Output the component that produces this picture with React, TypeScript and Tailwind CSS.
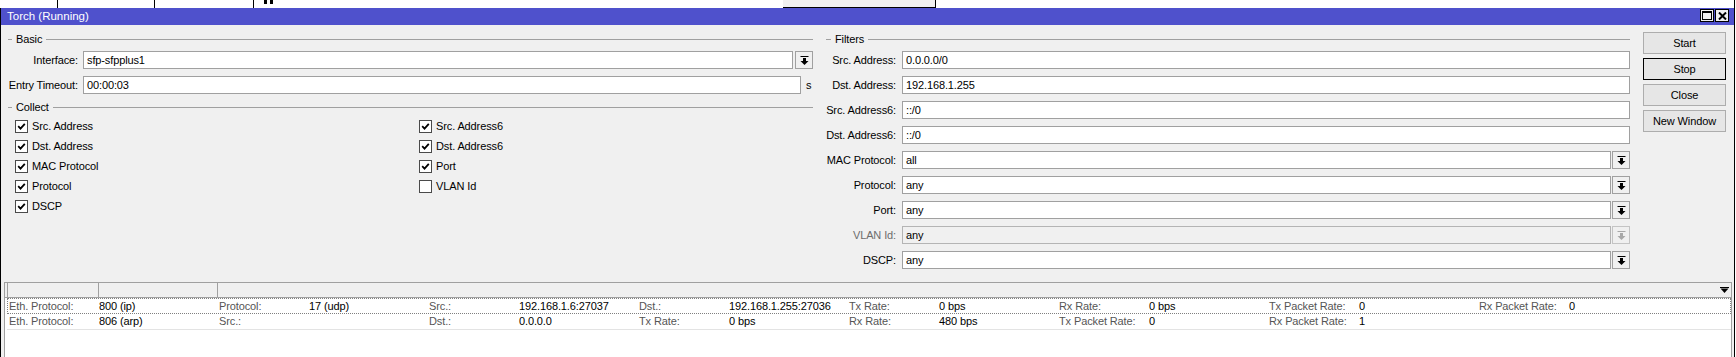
import React from "react";

function DropIcon({ disabled }: { disabled?: boolean }) {
  const c = disabled ? "#a8a8a8" : "#000";
  return (
    <svg width="9" height="9" viewBox="0 0 9 9">
      <rect x="0.5" y="0" width="8" height="1" fill={c} />
      <rect x="3" y="2" width="3" height="3" fill={c} />
      <polygon points="0.5,5 8.5,5 4.5,9" fill={c} />
    </svg>
  );
}

function DropBtn({ disabled }: { disabled?: boolean }) {
  return (
    <div
      className={
        "w-[18px] h-[18px] border flex items-center justify-center " +
        (disabled ? "border-[#c4c4c4] bg-[#f0f0f0]" : "border-[#a0a0a0] bg-[#f0f0f0]")
      }
    >
      <DropIcon disabled={disabled} />
    </div>
  );
}

function Legend({ title, dash }: { title: string; dash: string }) {
  return (
    <div className="h-[14px] flex items-center">
      <div className={dash + " h-px bg-[#a0a0a0]"} />
      <span className="px-[4px]">{title}</span>
      <div className="flex-1 h-px bg-[#a0a0a0]" />
    </div>
  );
}

function Check({ checked, label }: { checked: boolean; label: string }) {
  return (
    <div className="h-[20px] flex items-center">
      <div className="w-[13px] h-[13px] border border-[#4a4a4a] bg-white flex items-center justify-center">
        {checked && (
          <svg width="9" height="9" viewBox="0 0 9 9">
            <path d="M1.2 4.2 L3.5 6.6 L7.8 1.8" stroke="#000" strokeWidth="1.8" fill="none" />
          </svg>
        )}
      </div>
      <span className="ml-[4px]">{label}</span>
    </div>
  );
}

function FilterRow({
  label,
  value,
  drop,
  disabled,
  first,
}: {
  label: string;
  value: string;
  drop?: boolean;
  disabled?: boolean;
  first?: boolean;
}) {
  return (
    <div className={(first ? "mt-[5px]" : "mt-[7px]") + " h-[18px] flex items-center"}>
      <div className={"w-[70px] flex justify-end whitespace-nowrap " + (disabled ? "text-[#6d6d6d]" : "")}>
        {label}
      </div>
      <div
        className={
          "ml-[6px] flex-1 h-[18px] border flex items-center pl-[3px] " +
          (disabled ? "bg-[#f0f0f0] border-[#b4b4b4]" : "bg-white border-[#a0a0a0]")
        }
      >
        {value}
      </div>
      {drop && (
        <div className="ml-[1px]">
          <DropBtn disabled={disabled} />
        </div>
      )}
    </div>
  );
}

function Cell({ label, value }: { label: string; value: string }) {
  return (
    <div className="w-[210px] flex shrink-0 whitespace-nowrap">
      <span className="w-[90px] text-[#555]">{label}</span>
      <span className="w-[120px]">{value}</span>
    </div>
  );
}

function WinBtn({ kind }: { kind: "max" | "close" }) {
  return (
    <div className="w-[14px] h-[13px] border border-black bg-[#f0f0f0] flex items-center justify-center">
      {kind === "max" ? (
        <svg width="10" height="9" viewBox="0 0 10 9">
          <rect x="0.5" y="0.5" width="9" height="8" stroke="#000" fill="none" />
          <rect x="0" y="0" width="10" height="2" fill="#000" />
        </svg>
      ) : (
        <svg width="9" height="8" viewBox="0 0 9 8">
          <path d="M1 0.5 L8 7.5 M8 0.5 L1 7.5" stroke="#000" strokeWidth="2" />
        </svg>
      )}
    </div>
  );
}

export default function App() {
  const row1: [string, string][] = [
    ["Eth. Protocol:", "800 (ip)"],
    ["Protocol:", "17 (udp)"],
    ["Src.:", "192.168.1.6:27037"],
    ["Dst.:", "192.168.1.255:27036"],
    ["Tx Rate:", "0 bps"],
    ["Rx Rate:", "0 bps"],
    ["Tx Packet Rate:", "0"],
    ["Rx Packet Rate:", "0"],
  ];
  const row2: [string, string][] = [
    ["Eth. Protocol:", "806 (arp)"],
    ["Src.:", ""],
    ["Dst.:", "0.0.0.0"],
    ["Tx Rate:", "0 bps"],
    ["Rx Rate:", "480 bps"],
    ["Tx Packet Rate:", "0"],
    ["Rx Packet Rate:", "1"],
  ];

  return (
    <div className="w-[1736px] h-[357px] bg-white overflow-hidden font-['Liberation_Sans',Arial,sans-serif] text-[11px] tracking-[-0.12px] text-black leading-none">
      {/* strip of window behind */}
      <div className="h-[8px] flex">
        <div className="w-[57px] bg-white" />
        <div className="w-px bg-black" />
        <div className="w-[96px] bg-white" />
        <div className="w-px bg-black" />
        <div className="w-[98px] bg-white" />
        <div className="w-px bg-black" />
        <div className="w-[10px] bg-white" />
        <div className="w-[3px] h-[4px] bg-black" />
        <div className="w-[3px] bg-white" />
        <div className="w-[3px] h-[4px] bg-black" />
        <div className="w-[510px] bg-white" />
        <div className="w-[152px] bg-[#f0f0f0] border-b border-black" />
        <div className="w-px bg-black" />
        <div className="flex-1 bg-white" />
        <div className="w-px bg-black" />
        <div className="w-px bg-white" />
      </div>

      <div className="h-[349px] w-[1735px] border-x border-black bg-[#f0f0f0] flex flex-col">
        {/* title bar */}
        <div className="h-[17px] bg-[#4f51cc] flex items-center pl-[6px] pr-[5px] text-white">
          <span className="text-[11.5px] tracking-normal">Torch (Running)</span>
          <div className="flex-1" />
          <div className="flex gap-[1px] self-start mt-[1px]">
            <WinBtn kind="max" />
            <WinBtn kind="close" />
          </div>
        </div>

        {/* form */}
        <div className="h-[257px] flex pl-[7px] pt-[7px]">
          {/* Basic / Collect */}
          <div className="w-[805px] flex flex-col">
            <Legend title="Basic" dash="w-[4px]" />
            <div className="mt-[5px] h-[18px] flex items-center">
              <div className="w-[70px] flex justify-end whitespace-nowrap">Interface:</div>
              <div className="ml-[5px] flex-1 h-[18px] bg-white border border-[#a0a0a0] flex items-center pl-[3px]">
                sfp-sfpplus1
              </div>
              <div className="ml-[2px]">
                <DropBtn />
              </div>
            </div>
            <div className="mt-[7px] h-[18px] flex items-center">
              <div className="w-[70px] flex justify-end whitespace-nowrap">Entry Timeout:</div>
              <div className="ml-[5px] flex-1 h-[18px] bg-white border border-[#a0a0a0] flex items-center pl-[3px]">
                00:00:03
              </div>
              <span className="w-[12px] pl-[5px]">s</span>
            </div>
            <div className="mt-[6px]">
              <Legend title="Collect" dash="w-[4px]" />
            </div>
            <div className="mt-[2px] pl-[7px] grid grid-cols-[404px_1fr]">
              <Check checked label="Src. Address" />
              <Check checked label="Src. Address6" />
              <Check checked label="Dst. Address" />
              <Check checked label="Dst. Address6" />
              <Check checked label="MAC Protocol" />
              <Check checked label="Port" />
              <Check checked label="Protocol" />
              <Check checked={false} label="VLAN Id" />
              <Check checked label="DSCP" />
            </div>
          </div>

          {/* Filters */}
          <div className="ml-[13px] w-[804px] flex flex-col">
            <Legend title="Filters" dash="w-[5px]" />
            <FilterRow first label="Src. Address:" value="0.0.0.0/0" />
            <FilterRow label="Dst. Address:" value="192.168.1.255" />
            <FilterRow label="Src. Address6:" value="::/0" />
            <FilterRow label="Dst. Address6:" value="::/0" />
            <FilterRow label="MAC Protocol:" value="all" drop />
            <FilterRow label="Protocol:" value="any" drop />
            <FilterRow label="Port:" value="any" drop />
            <FilterRow label="VLAN Id:" value="any" drop disabled />
            <FilterRow label="DSCP:" value="any" drop />
          </div>

          {/* buttons */}
          <div className="ml-[13px] w-[83px] flex flex-col gap-[4px]">
            <div className="h-[22px] border border-[#adadad] bg-[#e6e6e6] flex items-center justify-center">Start</div>
            <div className="h-[22px] border border-black bg-[#e6e6e6] flex items-center justify-center">Stop</div>
            <div className="h-[22px] border border-[#adadad] bg-[#e6e6e6] flex items-center justify-center">Close</div>
            <div className="h-[22px] border border-[#adadad] bg-[#e6e6e6] flex items-center justify-center">New Window</div>
          </div>
        </div>

        {/* table */}
        <div className="flex-1 ml-[3px] mr-[2px] border-t border-l border-r border-[#a0a0a0] bg-white flex flex-col">
          <div className="h-[15px] bg-[#f0f0f0] border-b border-[#a0a0a0] flex">
            <div className="w-[3px] border-r border-[#a0a0a0]" />
            <div className="w-[91px] border-r border-[#a0a0a0]" />
            <div className="w-[119px] border-r border-[#a0a0a0]" />
            <div className="flex-1" />
            <div className="w-[14px] flex items-center justify-center">
              <svg width="9" height="6" viewBox="0 0 9 6">
                <rect x="0" y="0" width="9" height="1" fill="#000" />
                <polygon points="0.5,1.5 8.5,1.5 4.5,6" fill="#000" />
              </svg>
            </div>
          </div>
          <div className="ml-[2px] h-[16px] border border-dotted border-[#808080] flex items-center pl-[1px]">
            {row1.map(([l, v], i) => (
              <Cell key={i} label={l} value={v} />
            ))}
          </div>
          <div className="ml-[2px] h-[16px] border-b border-[#e3e3e3] flex items-center pl-[2px]">
            {row2.map(([l, v], i) => (
              <Cell key={i} label={l} value={v} />
            ))}
          </div>
        </div>
      </div>
    </div>
  );
}
